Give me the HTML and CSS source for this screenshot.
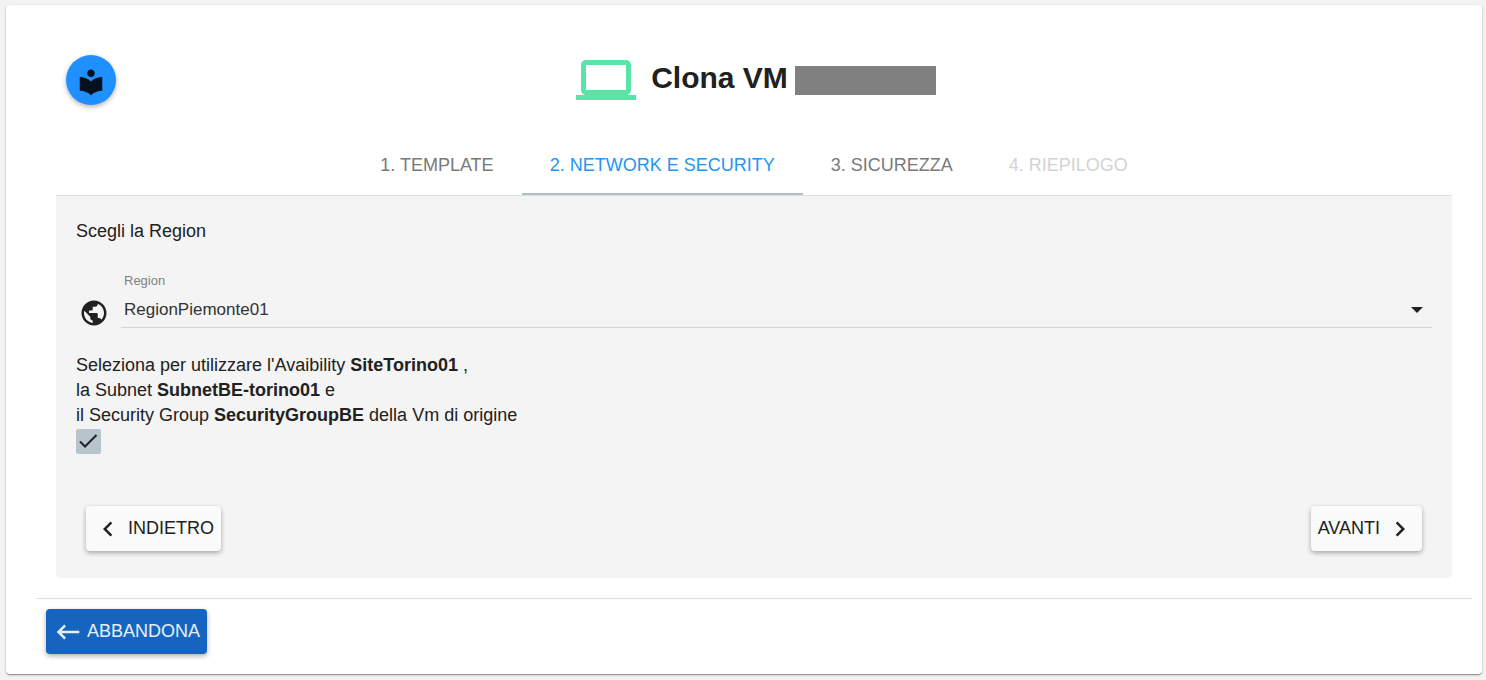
FILE: index.html
```html
<!DOCTYPE html>
<html lang="it">
<head>
<meta charset="utf-8">
<meta name="viewport" content="width=device-width, initial-scale=1">
<title>Clona VM</title>
<link rel="stylesheet" href="styles.css">
</head>
<body>
<main class="card">
  <header class="header">
    <button class="fab" type="button" aria-label="Guida">
      <svg class="icon" viewBox="0 0 24 24" aria-hidden="true"><path d="M12 11.55C9.64 9.35 6.48 8 3 8v11c3.48 0 6.64 1.35 9 3.55 2.36-2.19 5.52-3.55 9-3.55V8c-3.48 0-6.64 1.35-9 3.55zM12 8c1.66 0 3-1.34 3-3s-1.34-3-3-3-3 1.34-3 3 1.34 3 3 3z"/></svg>
    </button>
    <div class="heading">
      <svg class="laptop" viewBox="0 4 24 16" aria-hidden="true"><path d="M20 18c1.1 0 1.99-.9 1.99-2L22 6c0-1.1-.9-2-2-2H4c-1.1 0-2 .9-2 2v10c0 1.1.9 2 2 2H0v2h24v-2h-4zM4 6h16v10H4V6z"/></svg>
      <h1 class="title">Clona VM</h1>
      <span class="redacted"></span>
    </div>
  </header>

  <section class="wizard">
    <nav class="tabs" role="tablist">
      <button class="tab" type="button" role="tab">1. TEMPLATE</button>
      <button class="tab tab-active" type="button" role="tab" aria-selected="true">2. NETWORK E SECURITY</button>
      <button class="tab" type="button" role="tab">3. SICUREZZA</button>
      <button class="tab" type="button" role="tab" disabled>4. RIEPILOGO</button>
    </nav>
    <form class="panel">
      <p class="intro">Scegli la Region</p>
      <div class="field">
        <svg class="icon" viewBox="0 0 24 24" aria-hidden="true"><path d="M12 2C6.48 2 2 6.48 2 12s4.48 10 10 10 10-4.48 10-10S17.52 2 12 2zm-1 17.93c-3.95-.49-7-3.85-7-7.93 0-.62.08-1.21.21-1.79L9 15v1c0 1.1.9 2 2 2v1.93zm6.9-2.54c-.26-.81-1-1.39-1.9-1.39h-1v-3c0-.55-.45-1-1-1H8v-2h2c.55 0 1-.45 1-1V7h2c1.1 0 2-.9 2-2v-.41c2.93 1.19 5 4.06 5 7.41 0 2.08-.8 3.97-2.1 5.39z"/></svg>
        <div class="field-body">
          <label class="label" for="region">Region</label>
          <div class="select-wrap">
            <select class="select" id="region"><option>RegionPiemonte01</option></select>
            <svg class="arrow" viewBox="0 0 12 6" aria-hidden="true"><path d="M0 0h12L6 6z"/></svg>
          </div>
        </div>
      </div>
      <label class="note" for="reuse">Seleziona per utilizzare l'Avaibility <b>SiteTorino01</b> ,<br>la Subnet <b>SubnetBE-torino01</b> e<br>il Security Group <b>SecurityGroupBE</b> della Vm di origine</label>
      <div class="check">
        <input class="check-box" type="checkbox" id="reuse" checked>
        <svg class="check-mark" viewBox="0 0 25 25" aria-hidden="true"><path d="M4 12.500l5 5L20.500 6"/></svg>
      </div>
      <div class="actions">
        <button class="button" type="button">
          <svg class="icon" viewBox="0 0 24 24" aria-hidden="true"><path d="M15.410 7.410L14 6l-6 6 6 6 1.410-1.410L10.830 12z"/></svg>
          <span>INDIETRO</span>
        </button>
        <button class="button" type="button">
          <span>AVANTI</span>
          <svg class="icon" viewBox="0 0 24 24" aria-hidden="true"><path d="M10 6L8.590 7.410 13.170 12l-4.580 4.590L10 18l6-6z"/></svg>
        </button>
      </div>
    </form>
  </section>

  <footer class="footer">
    <button class="button button-primary" type="button">
      <svg class="icon" viewBox="0 0 24 24" aria-hidden="true"><path d="M21 11H6.830l3.580-3.590L9 6l-6 6 6 6 1.410-1.410L6.830 13H21z"/></svg>
      <span>ABBANDONA</span>
    </button>
  </footer>
</main>
</body>
</html>
```
FILE: styles.css
```css
* { box-sizing: border-box; }

body {
  margin: 0;
  padding: 5px 4px 6px 6px;
  background: #f3f3f3;
  color: #212121;
  font: 18px/25px "Liberation Sans", Arial, sans-serif;
}

button, select { font: inherit; color: inherit; }

.card {
  padding: 50px 10px 20px 30px;
  background: #fff;
  border-radius: 4px;
  box-shadow: 0 1px 3px rgba(0, 0, 0, .2), 0 1px 1px rgba(0, 0, 0, .2), 0 2px 1px -1px rgba(0, 0, 0, .14);
}

.icon {
  flex: none;
  width: 30px;
  height: 30px;
  fill: currentColor;
}

.header {
  display: grid;
  grid-template-columns: 50px 1fr 50px;
  align-items: center;
  padding: 0 26px 0 30px;
}

.fab {
  display: flex;
  justify-content: center;
  width: 50px;
  height: 50px;
  padding: 12px 0 0;
  border: 0;
  border-radius: 50%;
  background: #1e90ff;
  color: #04121f;
  box-shadow: 0 2px 5px rgba(0, 0, 0, .3);
}

.heading {
  display: flex;
  align-items: center;
  justify-content: center;
}

.laptop {
  width: 60px;
  height: 40px;
  margin-right: 15px;
  fill: #59e3a7;
}

.title {
  margin: 0 7px 4px 0;
  font-size: 30px;
  line-height: 40px;
}

.redacted {
  width: 141px;
  height: 29px;
  background: #808080;
}

.wizard { padding: 30px 20px 20px; }

.tabs {
  display: flex;
  justify-content: center;
  border-bottom: 1px solid #dfdfdf;
}

.tab {
  height: 60px;
  padding: 2px 28px 0;
  border: 0;
  border-bottom: 2px solid transparent;
  background: none;
  color: #7a7a7a;
}

.tab-active {
  border-color: #b0bec5;
  color: #2196f3;
}

.tab:disabled { color: #d3d3d3; }

.panel {
  padding: 23px 20px 27px;
  background: #f4f4f4;
  border-radius: 0 0 4px 4px;
}

.intro { margin: 0 0 28px; }

.field {
  display: flex;
  align-items: flex-end;
  gap: 12px;
  margin: 0 0 25px 3px;
}

.field-body {
  flex: 1;
  border-bottom: 1px solid #d5d5d5;
}

.label {
  display: block;
  padding-left: 3px;
  color: #808080;
  font-size: 13px;
  line-height: 18px;
}

.select-wrap {
  display: grid;
  align-items: center;
  padding-top: 2px;
}

.select {
  grid-area: 1 / 1;
  width: 100%;
  height: 35px;
  padding: 0 3px;
  border: 0;
  background: none;
  appearance: none;
  color: #333;
  font-size: 17px;
}

.arrow {
  grid-area: 1 / 1;
  justify-self: end;
  width: 12px;
  height: 6px;
  margin-right: 9px;
  fill: #212121;
  pointer-events: none;
}

.note { display: block; }

.check {
  display: grid;
  width: 25px;
  height: 25px;
  margin-top: 1px;
}

.check-box {
  grid-area: 1 / 1;
  width: 25px;
  height: 25px;
  margin: 0;
  border-radius: 2px;
  appearance: none;
  background: #b7c4cb;
}

.check-mark {
  grid-area: 1 / 1;
  fill: none;
  stroke: #212121;
  stroke-width: 2;
  pointer-events: none;
}

.actions {
  display: flex;
  justify-content: space-between;
  padding: 52px 10px 0;
}

.button {
  display: flex;
  align-items: center;
  gap: 5px;
  height: 45px;
  padding: 0 7px;
  border: 0;
  border-radius: 4px;
  background: #fafafa;
  box-shadow: 0 2px 5px rgba(0, 0, 0, .32);
}

.button-primary {
  gap: 4px;
  background: #1565c0;
  color: #e8effa;
}

.footer {
  padding: 10px 10px 0;
  border-top: 1px solid #e0e0e0;
}
```
